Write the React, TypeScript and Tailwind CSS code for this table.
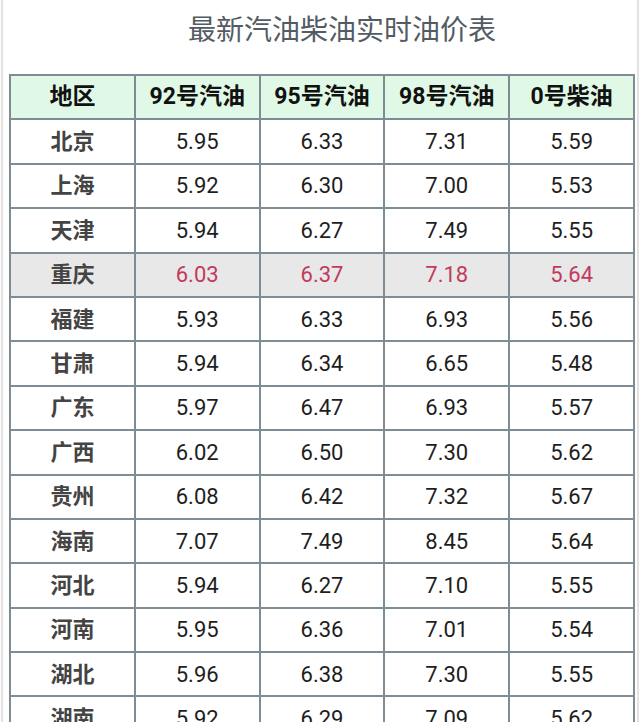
import React from "react";

const rows: [string, string, string, string, string][] = [
  ["北京", "5.95", "6.33", "7.31", "5.59"],
  ["上海", "5.92", "6.30", "7.00", "5.53"],
  ["天津", "5.94", "6.27", "7.49", "5.55"],
  ["重庆", "6.03", "6.37", "7.18", "5.64"],
  ["福建", "5.93", "6.33", "6.93", "5.56"],
  ["甘肃", "5.94", "6.34", "6.65", "5.48"],
  ["广东", "5.97", "6.47", "6.93", "5.57"],
  ["广西", "6.02", "6.50", "7.30", "5.62"],
  ["贵州", "6.08", "6.42", "7.32", "5.67"],
  ["海南", "7.07", "7.49", "8.45", "5.64"],
  ["河北", "5.94", "6.27", "7.10", "5.55"],
  ["河南", "5.95", "6.36", "7.01", "5.54"],
  ["湖北", "5.96", "6.38", "7.30", "5.55"],
  ["湖南", "5.92", "6.29", "7.09", "5.62"],
];

const headers = ["地区", "92号汽油", "95号汽油", "98号汽油", "0号柴油"];

export default function App() {
  return (
    <div
      className="w-[640px] h-[722px] overflow-hidden bg-white"
      style={{ fontFamily: "Roboto, 'Noto Sans CJK SC', sans-serif" }}
    >
      <div className="mx-[1px] h-full border-x-2 border-[#e2e2e2] pt-[13px]">
        <div className="pl-[44px] text-center text-[28px] leading-[36px] text-[#535b63]">
          最新汽油柴油实时油价表
        </div>
        <table className="mt-[25px] ml-[6px] w-[626px] table-fixed border-collapse">
          <thead>
            <tr className="h-[44.4px] bg-[#e0f8e6]">
              {headers.map((h) => (
                <th
                  key={h}
                  className="border-2 border-[#7d8c95] p-0 text-center text-[23px] font-bold text-[#111111]"
                >
                  {h}
                </th>
              ))}
            </tr>
          </thead>
          <tbody>
            {rows.map((r) => {
              const hl = r[0] === "重庆";
              return (
                <tr key={r[0]} className={hl ? "h-[44.4px] bg-[#e8e8e8]" : "h-[44.4px] bg-white"}>
                  {r.map((c, i) => (
                    <td
                      key={i}
                      className={
                        i === 0
                          ? "border-2 border-[#7d8c95] p-0 text-center text-[22px] font-semibold text-[#444444]"
                          : hl
                          ? "border-2 border-[#7d8c95] p-0 text-center text-[22px] text-[#c23a5e]"
                          : "border-2 border-[#7d8c95] p-0 text-center text-[22px] text-[#1e1e1e]"
                      }
                    >
                      {c}
                    </td>
                  ))}
                </tr>
              );
            })}
          </tbody>
        </table>
      </div>
    </div>
  );
}
